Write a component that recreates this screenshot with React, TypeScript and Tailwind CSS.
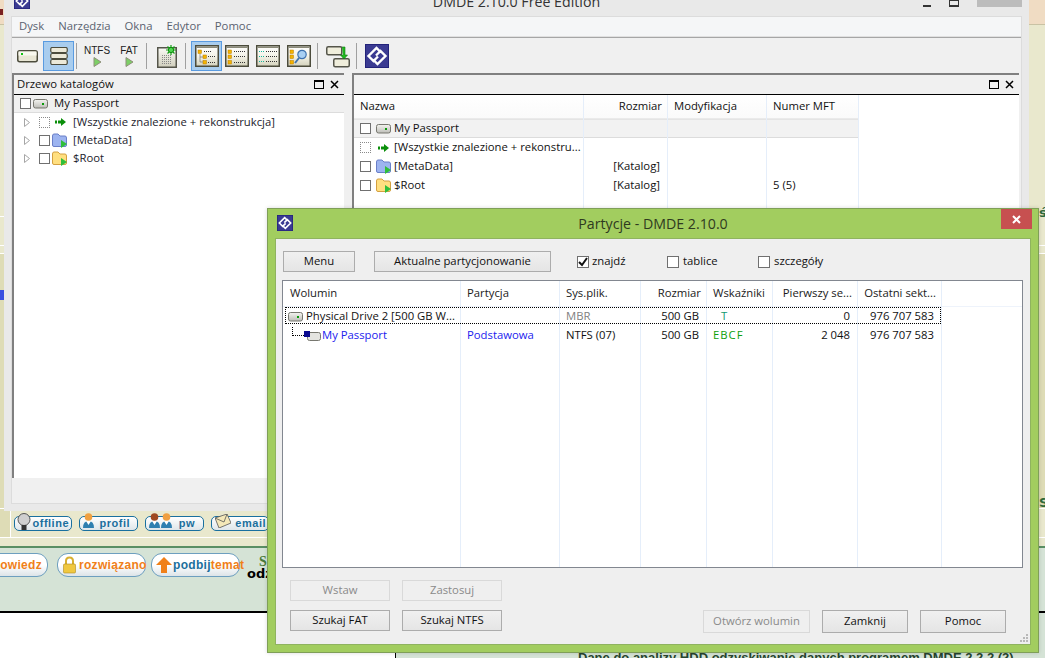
import React from "react";

const Logo = ({ s = 16 }: { s?: number }) => (
  <svg width={s} height={s} viewBox="0 0 24 24" className="block shrink-0">
    <rect width="24" height="24" fill="#23237a" />
    <rect x="1" y="1" width="22" height="22" fill="#3b3b92" />
    <g fill="none" stroke="#fff" strokeWidth="2.4">
      <path d="M16 8.5 L11.5 4 L3.5 12 L8.5 17 L13 12.5" />
      <path d="M8 15.5 L12.5 20 L20.5 12 L15.5 7 L11 11.5" />
    </g>
  </svg>
);

const Drive = () => (
  <svg width="15" height="11" viewBox="0 0 15 11" className="block shrink-0">
    <defs>
      <linearGradient id="dg" x1="0" y1="0" x2="0" y2="1">
        <stop offset="0" stopColor="#f4f4f0" />
        <stop offset="1" stopColor="#bdbdb8" />
      </linearGradient>
    </defs>
    <rect x="0.5" y="1.5" width="14" height="8.5" rx="2" fill="url(#dg)" stroke="#77776f" />
    <rect x="9" y="5" width="2" height="2" fill="#0a9a0a" />
  </svg>
);

const Partition = () => (
  <svg width="17" height="10" viewBox="0 0 17 10" className="block shrink-0">
    <rect x="3.5" y="1.5" width="13" height="8" rx="2" fill="#e4e4e0" stroke="#77776f" />
    <rect x="0" y="0" width="6" height="6" fill="#0a0a90" />
  </svg>
);

const Folder = ({ blue }: { blue?: boolean }) => (
  <svg width="16" height="15" viewBox="0 0 16 15" className="block shrink-0">
    <path
      d="M0.5 3 Q0.5 1 2 1 H6 L8 3 H13 Q14.5 3 14.5 5 V12 Q14.5 13.5 13 13.5 H2 Q0.5 13.5 0.5 12 Z"
      fill={blue ? "#9db4f0" : "#ffdf80"}
      stroke={blue ? "#6a7fc8" : "#d4a040"}
    />
    <path d="M9 7 L15 11 L9 15 Z" fill="#2fbf3a" />
  </svg>
);

const GreenArrow = () => (
  <svg width="11" height="8" viewBox="0 0 11 8" className="block shrink-0">
    <path d="M0 2.5 H2 V5.5 H0 Z M3 2.5 H6 V0 L11 4 L6 8 V5.5 H3 Z" fill="#0a8f0a" />
  </svg>
);

const Check = ({ dotted, size = "w-[11px] h-[11px]", checked }: { dotted?: boolean; size?: string; checked?: boolean }) => (
  <span
    className={`${size} shrink-0 bg-white flex items-center justify-center ${
      dotted ? "border border-dotted border-[#8a8a8a]" : "border border-[#707070]"
    }`}
  >
    {checked && (
      <svg width="10" height="10" viewBox="0 0 10 10">
        <path d="M1 5 L4 8 L9 1" fill="none" stroke="#111" strokeWidth="2" />
      </svg>
    )}
  </span>
);

const Arrowhead = () => (
  <svg width="6" height="9" viewBox="0 0 6 9" className="block shrink-0">
    <path d="M0.5 0.5 L5.5 4.5 L0.5 8.5 Z" fill="#fff" stroke="#a6a6a6" />
  </svg>
);

const PanelControls = () => (
  <div className="flex items-center gap-[6px]">
    <span className="block w-[10px] h-[9px] border border-black border-t-2" />
    <svg width="9" height="9" viewBox="0 0 9 9" className="block">
      <path d="M1 1 L8 8 M8 1 L1 8" stroke="#000" strokeWidth="1.5" />
    </svg>
  </div>
);

const Sep = ({ ml }: { ml: string }) => <span className={`block w-[1px] h-[26px] bg-[#a0a0a0] shrink-0 ${ml}`} />;

const DriveTool = () => (
  <svg width="21" height="13" viewBox="0 0 21 13" className="block ml-[2px] mt-[1px] shrink-0">
    <rect x="0.75" y="0.75" width="19.5" height="11" rx="2" fill="#e8e6d4" stroke="#4c4c3c" strokeWidth="1.5" />
    <rect x="1.5" y="1.5" width="18" height="4" fill="#f8f8ee" />
    <rect x="4" y="3" width="2" height="2" fill="#12c212" />
  </svg>
);

const StackTool = () => (
  <span className="ml-[5px] w-[31px] h-[30px] bg-[#a9cdee] border border-[#5a9be0] flex items-center justify-center shrink-0">
    <svg width="18" height="18" viewBox="0 0 18 18" className="block">
      {[1, 7, 13].map((y) => (
        <rect key={y} x="0.75" y={y - 0.5} width="16.5" height="5" rx="1.5" fill="#ece9d8" stroke="#4c4c3c" strokeWidth="1.2" />
      ))}
    </svg>
  </span>
);

const Play = () => (
  <svg width="9" height="10" viewBox="0 0 9 10" className="block">
    <path d="M1 0.5 L8 5 L1 9.5 Z" fill="#7ccf66" stroke="#8f8f7a" />
  </svg>
);

const LabelTool = ({ t, cls }: { t: string; cls: string }) => (
  <span className={`flex flex-col items-center shrink-0 ${cls}`}>
    <span className="text-[10px] leading-[11px] text-[#222] font-['Liberation_Sans',sans-serif]">{t}</span>
    <span className="mt-[1px]">
      <Play />
    </span>
  </span>
);

const Frame = ({ children }: { children: React.ReactNode }) => (
  <svg width="24" height="22" viewBox="0 0 24 22" className="block shrink-0">
    <defs>
      <linearGradient id="fg" x1="0" y1="0" x2="0" y2="1">
        <stop offset="0" stopColor="#ffffff" />
        <stop offset="0.5" stopColor="#f4f3e8" />
        <stop offset="1" stopColor="#d4d2bc" />
      </linearGradient>
    </defs>
    <rect x="0.75" y="0.75" width="22.5" height="20.5" fill="url(#fg)" stroke="#4c4c3c" strokeWidth="1.5" />
    <rect x="1.5" y="1.5" width="21" height="1.5" fill="#8a8a78" />
    {children}
  </svg>
);

const Dots = ({ x, y, c = "#333", n = 4 }: { x: number; y: number; c?: string; n?: number }) => (
  <g fill={c}>
    {Array.from({ length: n }).map((_, i) => (
      <rect key={i} x={x + i * 2} y={y} width="1" height="1" />
    ))}
  </g>
);
const Y = ({ x, y }: { x: number; y: number }) => <rect x={x} y={y} width="3.5" height="3.5" fill="#f4b400" stroke="#b87a00" strokeWidth="0.5" />;

const DocStar = () => (
  <svg width="21" height="23" viewBox="0 0 21 23" className="block shrink-0">
    <defs>
      <linearGradient id="ds" x1="0" y1="0" x2="0" y2="1">
        <stop offset="0" stopColor="#fafaf6" />
        <stop offset="1" stopColor="#d0cebc" />
      </linearGradient>
    </defs>
    <rect x="0.75" y="2.75" width="18.5" height="19.5" fill="url(#ds)" stroke="#55554a" strokeWidth="1.5" />
    {[10, 12, 14, 16, 18].map((y) => (
      <Dots key={y} x={5} y={y} c="#888" n={5} />
    ))}
    <g stroke="#12a012" strokeWidth="1.2">
      <path d="M14 0 V10 M9 5 H19 M10.5 1.5 L17.5 8.5 M17.5 1.5 L10.5 8.5" />
    </g>
    <circle cx="14" cy="5" r="2.6" fill="#4fd84f" stroke="#0e8a0e" />
  </svg>
);

const SwapTool = () => (
  <svg width="24" height="24" viewBox="0 0 24 24" className="block shrink-0 ml-[8px]">
    <rect x="0.75" y="2.75" width="15" height="8" rx="1.5" fill="#f0eedc" stroke="#55554a" strokeWidth="1.5" />
    <rect x="7.75" y="14.75" width="15.5" height="8" rx="1.5" fill="#f0eedc" stroke="#55554a" strokeWidth="1.5" />
    <path d="M16 3 H19 V11 H21.5 L18 15 L14.5 11 H17" fill="#22b822" stroke="#0e7a0e" strokeWidth="0.6" />
  </svg>
);

const Toolbar = () => (
  <div className="h-[35px] bg-[#f0f0f0] flex items-center pl-[3px] pt-[1px]">
    <DriveTool />
    <StackTool />
    <Sep ml="ml-[2px]" />
    <LabelTool t="NTFS" cls="ml-[8px] w-[24px]" />
    <LabelTool t="FAT" cls="ml-[10px] w-[20px]" />
    <Sep ml="ml-[7px]" />
    <span className="ml-[10px]">
      <DocStar />
    </span>
    <Sep ml="ml-[7px]" />
    <span className="ml-[5px] w-[31px] h-[30px] bg-[#a9cdee] border border-[#5a9be0] flex items-center justify-center shrink-0">
      <Frame>
        <Y x={3} y={5} />
        <Y x={8} y={10} />
        <Y x={8} y={15.5} />
        <path d="M5 9 V17 H8 M5 12 H8" stroke="#777" fill="none" strokeWidth="0.7" />
        <Dots x={9} y={6} />
        <Dots x={13} y={11} n={4} />
        <Dots x={13} y={17} n={4} />
      </Frame>
    </span>
    <span className="ml-[3px]">
      <Frame>
        <Y x={3} y={5} />
        <Y x={3} y={10} />
        <Y x={3} y={15.5} />
        <Dots x={9} y={6} n={6} />
        <Dots x={9} y={11} n={6} />
        <Dots x={9} y={17} n={6} />
      </Frame>
    </span>
    <span className="ml-[7px]">
      <Frame>
        <Dots x={3} y={6} c="#15b8a0" n={3} />
        <Dots x={3} y={11} c="#15b8a0" n={3} />
        <Dots x={3} y={16} c="#15b8a0" n={3} />
        <Dots x={10} y={6} n={6} />
        <Dots x={10} y={11} n={6} />
        <Dots x={10} y={16} n={6} />
      </Frame>
    </span>
    <span className="ml-[7px]">
      <Frame>
        <Y x={3} y={5} />
        <Y x={3} y={10} />
        <Y x={3} y={15.5} />
        <circle cx="15" cy="9.5" r="4.2" fill="#a8d0f4" stroke="#3f73b0" strokeWidth="1.2" />
        <path d="M12 13 L8 18" stroke="#3f73b0" strokeWidth="2" />
      </Frame>
    </span>
    <Sep ml="ml-[6px]" />
    <SwapTool />
    <Sep ml="ml-[6px]" />
    <span className="ml-[8px]">
      <Logo s={24} />
    </span>
  </div>
);

const menu: [string, string][] = [
  ["Dysk", "ml-[7px]"],
  ["Narzędzia", "ml-[14px]"],
  ["Okna", "ml-[14px]"],
  ["Edytor", "ml-[14px]"],
  ["Pomoc", "ml-[14px]"],
];

const TreeRow = ({ icon, text, dotted }: { icon: React.ReactNode; text: string; dotted?: boolean }) => (
  <div className="h-[18px] flex items-center pl-[10px]">
    <Arrowhead />
    <span className="ml-[9px]">
      <Check dotted={dotted} />
    </span>
    <span className={`w-[16px] ml-[2px] flex justify-center`}>{icon}</span>
    <span className="ml-[5px] text-[#1c1c2c] whitespace-nowrap">{text}</span>
  </div>
);

const LeftPanel = () => (
  <div className="w-[332px] border-t-2 border-l-2 border-[#808080] flex flex-col bg-white">
    <div className="h-[20px] bg-[#f0f0f0] border-b border-black flex items-center justify-between pl-[3px] pr-[5px] shrink-0">
      <span>Drzewo katalogów</span>
      <PanelControls />
    </div>
    <div className="h-[18px] bg-[#f0f0f0] border-b border-[#dcdcdc] flex items-center pl-[6px] shrink-0">
      <Check />
      <span className="ml-[2px]">
        <Drive />
      </span>
      <span className="ml-[6px]">My Passport</span>
    </div>
    <div>
      <TreeRow icon={<GreenArrow />} text="[Wszystkie znalezione + rekonstrukcja]" dotted />
      <TreeRow icon={<Folder blue />} text="[MetaData]" />
      <TreeRow icon={<Folder />} text="$Root" />
    </div>
  </div>
);

const fileCols = [
  { w: "w-[230px]", head: "Nazwa", h: "pl-[6px]" },
  { w: "w-[84px]", head: "Rozmiar", h: "justify-end pr-[5px]" },
  { w: "w-[99px]", head: "Modyfikacja", h: "pl-[6px]" },
  { w: "w-[92px]", head: "Numer MFT", h: "pl-[6px]" },
];

const NameCell = ({ icon, text, dotted }: { icon: React.ReactNode; text: string; dotted?: boolean }) => (
  <div className="h-[19px] flex items-center pl-[6px] whitespace-nowrap">
    <Check dotted={dotted} />
    <span className="w-[15px] ml-[5px] flex justify-center">{icon}</span>
    <span className="ml-[3px]">{text}</span>
  </div>
);

const RightPanel = () => (
  <div className="w-[667px] ml-[8px] border-t-2 border-l-2 border-[#808080] flex flex-col bg-white relative">
    <div className="h-[20px] bg-[#f0f0f0] border-b border-black flex items-center justify-end pr-[5px] shrink-0">
      <PanelControls />
    </div>
    <div className="flex flex-1 min-h-0">
      <div className="flex flex-1">
        {fileCols.map((c, i) => (
          <div key={c.head} className={`${c.w} border-r border-[#e5eefa] shrink-0`}>
            <div className={`h-[24px] flex items-center ${c.h} bg-gradient-to-b from-white to-[#fafafa] border-b border-[#eaeaea]`}>{c.head}</div>
            <div className="h-[19px] bg-[#f2f2f2] border-b border-[#dcdcdc] border-t border-t-[#e4e4e4]">
              {i === 0 && (
                <div className="-mt-[1px]">
                  <NameCell icon={<Drive />} text="My Passport" />
                </div>
              )}
            </div>
            {i === 0 && (
              <>
                <NameCell icon={<GreenArrow />} text="[Wszystkie znalezione + rekonstru..." dotted />
                <NameCell icon={<Folder blue />} text="[MetaData]" />
                <NameCell icon={<Folder />} text="$Root" />
              </>
            )}
            {i === 1 && (
              <>
                <div className="h-[19px]" />
                <div className="h-[19px] flex items-center justify-end pr-[7px]">[Katalog]</div>
                <div className="h-[19px] flex items-center justify-end pr-[7px]">[Katalog]</div>
              </>
            )}
            {i === 3 && (
              <>
                <div className="h-[38px]" />
                <div className="h-[19px] flex items-center pl-[6px]">5 (5)</div>
              </>
            )}
          </div>
        ))}
      </div>
    </div>
  </div>
);

const Btn = ({ w, h = "h-[21px]", children, off }: { w: string; h?: string; children: React.ReactNode; off?: boolean }) => (
  <button
    className={`${w} ${h} shrink-0 flex items-center justify-center border ${
      off ? "border-[#d9d9d9] text-[#8a8a8a] bg-[#efefef]" : "border-[#acacac] text-[#111] bg-gradient-to-b from-[#f0f0f0] to-[#e5e5e5]"
    }`}
  >
    {children}
  </button>
);

const volCols = [
  { w: "w-[178px]", head: "Wolumin", h: "pl-[7px]" },
  { w: "w-[99px]", head: "Partycja", h: "pl-[6px]" },
  { w: "w-[81px]", head: "Sys.plik.", h: "pl-[6px]" },
  { w: "w-[66px]", head: "Rozmiar", h: "justify-end pr-[5px]" },
  { w: "w-[66px]", head: "Wskaźniki", h: "pl-[6px]" },
  { w: "w-[85px]", head: "Pierwszy se...", h: "justify-end pr-[5px]" },
  { w: "w-[84px]", head: "Ostatni sekt...", h: "justify-end pr-[5px]" },
];

const Cell = ({ cls = "", children }: { cls?: string; children?: React.ReactNode }) => (
  <div className={`h-[19px] flex items-center whitespace-nowrap ${cls}`}>{children}</div>
);

const volRows: React.ReactNode[][] = [
  [
    <Cell cls="pl-[5px]" key="a">
      <Drive />
      <span className="ml-[3px] text-[#111]">Physical Drive 2 [500 GB W...</span>
    </Cell>,
    <Cell key="b" />,
    <Cell cls="pl-[6px] text-[#7f7f7f]" key="c">MBR</Cell>,
    <Cell cls="justify-end pr-[7px]" key="d">500 GB</Cell>,
    <Cell cls="pl-[14px] text-[#0f9a70]" key="e">T</Cell>,
    <Cell cls="justify-end pr-[7px]" key="f">0</Cell>,
    <Cell cls="justify-end pr-[7px]" key="g">976 707 583</Cell>,
  ],
  [
    <Cell cls="pl-[8px]" key="a">
      <span className="w-[12px] h-[9px] -mt-[8px] border-l border-b border-dotted border-black shrink-0 ml-[1px]" />
      <Partition />
      <span className="ml-[1px] text-[#2222ee]">My Passport</span>
    </Cell>,
    <Cell cls="pl-[6px] text-[#2222ee]" key="b">Podstawowa</Cell>,
    <Cell cls="pl-[6px]" key="c">NTFS (07)</Cell>,
    <Cell cls="justify-end pr-[7px]" key="d">500 GB</Cell>,
    <Cell cls="pl-[6px] text-[#0da00d] tracking-[1px]" key="e">EBCF</Cell>,
    <Cell cls="justify-end pr-[7px]" key="f">2 048</Cell>,
    <Cell cls="justify-end pr-[7px]" key="g">976 707 583</Cell>,
  ],
];

const VolumeList = () => (
  <div className="relative h-[288px] ml-[6px] mr-[7px] mt-[8px] border border-[#828790] bg-white flex">
    {volCols.map((c, i) => (
      <div key={c.head} className={`${c.w} border-r border-[#e5eefa] shrink-0`}>
        <div className={`h-[26px] pb-[1px] pt-[1px] flex items-center whitespace-nowrap ${c.h} border-b border-[#eef3fb] text-[#1a1a1a]`}>{c.head}</div>
        {volRows.map((r, j) => (
          <React.Fragment key={j}>{r[i]}</React.Fragment>
        ))}
      </div>
    ))}
    <div className="flex-1">
      <div className="h-[26px] border-b border-[#eef3fb]" />
    </div>
    <span className="absolute left-[2px] top-[26px] w-[656px] h-[17px] border border-dotted border-black pointer-events-none" />
  </div>
);

const Dialog = () => (
  <div className="absolute left-[267px] top-[208px] w-[772px] h-[445px] bg-[#a2cd5f] border border-[#7f9f58] flex flex-col px-[7px] pb-[7px] shadow-[0_0_4px_rgba(0,0,0,0.15)]">
    <div className="h-[29px] relative flex items-center justify-center shrink-0 text-[14.2px] text-[#2f3a20]">
      <span className="absolute left-[2px] top-[6px]">
        <Logo s={16} />
      </span>
      <span>Partycje - DMDE 2.10.0</span>
      <span className="absolute right-[-1px] top-0 w-[31px] h-[20px] bg-[#c75050] flex items-center justify-center">
        <svg width="9" height="9" viewBox="0 0 9 9">
          <path d="M1 1 L8 8 M8 1 L1 8" stroke="#fff" strokeWidth="2" />
        </svg>
      </span>
    </div>
    <div className="flex-1 bg-[#efefef] border border-[#8fb35f] flex flex-col relative">
      <div className="flex items-center pl-[7px] pt-[12px] h-[33px]">
        <Btn w="w-[72px]">Menu</Btn>
        <span className="ml-[19px]">
          <Btn w="w-[177px]">Aktualne partycjonowanie</Btn>
        </span>
        <span className="ml-[26px]">
          <Check size="w-[12px] h-[12px]" checked />
        </span>
        <span className="ml-[3px] w-[75px]">znajdź</span>
        <Check size="w-[12px] h-[12px]" />
        <span className="ml-[4px] w-[75px]">tablice</span>
        <Check size="w-[12px] h-[12px]" />
        <span className="ml-[4px]">szczegóły</span>
      </div>
      <VolumeList />
      <div className="flex justify-between pl-[14px] pr-[24px] pt-[12px] flex-1">
        <div className="flex flex-col gap-[9px]">
          <div className="flex gap-[12px]">
            <Btn w="w-[100px]" off>Wstaw</Btn>
            <Btn w="w-[100px]" off>Zastosuj</Btn>
          </div>
          <div className="flex gap-[12px]">
            <Btn w="w-[100px]">Szukaj FAT</Btn>
            <Btn w="w-[100px]">Szukaj NTFS</Btn>
          </div>
        </div>
        <div className="flex gap-[12px] items-end pb-[11px]">
          <Btn w="w-[107px]" h="h-[23px]" off>Otwórz wolumin</Btn>
          <Btn w="w-[86px]" h="h-[23px]">Zamknij</Btn>
          <Btn w="w-[86px]" h="h-[23px]">Pomoc</Btn>
        </div>
      </div>
      <svg width="9" height="9" viewBox="0 0 9 9" className="absolute right-[1px] bottom-[1px]">
        <g fill="#b8b8b8">
          <rect x="6" y="0" width="2" height="2" />
          <rect x="3" y="3" width="2" height="2" />
          <rect x="6" y="3" width="2" height="2" />
          <rect x="0" y="6" width="2" height="2" />
          <rect x="3" y="6" width="2" height="2" />
          <rect x="6" y="6" width="2" height="2" />
        </g>
      </svg>
    </div>
  </div>
);

const MainWindow = () => (
  <div className="absolute left-[4px] top-[-12px] w-[1025px] h-[523px] bg-[#e9e9e9] pl-[7px] pr-[7px] flex flex-col">
    <div className="h-[28px] shrink-0 flex items-center justify-center relative text-[14.2px] text-[#333]">
      <span className="absolute left-[3px] top-[5px]">
        <Logo s={16} />
      </span>
      <span>DMDE 2.10.0 Free Edition</span>
      <div className="absolute right-0 top-[12px] flex items-start">
        <span className="block w-[8px] h-[7px] border-b-2 border-[#333] mr-[18px]" />
        <span className="block w-[10px] h-[7px] border border-[#333] border-b-2 mr-[18px]" />
        <span className="block w-[45px] h-[7px] bg-[#bcbcbc]" />
      </div>
    </div>
    <div className="border border-[#dcdcdc] flex flex-col h-[488px] bg-[#f0f0f0]">
      <div className="h-[19px] bg-[#f5f6f7] flex items-center text-[#5a6270] shrink-0">
        {menu.map(([m, c]) => (
          <span key={m} className={c}>
            {m}
          </span>
        ))}
      </div>
      <div className="h-[1px] bg-[#e0e0e0]" />
      <div className="h-[1px] bg-[#a6a6a6]" />
      <Toolbar />
      <div className="flex h-[405px] shrink-0">
        <LeftPanel />
        <RightPanel />
      </div>
    </div>
  </div>
);

const Pill = ({ w, children, cls = "" }: { w: string; children: React.ReactNode; cls?: string }) => (
  <span className={`${w} h-[15px] shrink-0 rounded-[5px] border border-[#19709f] bg-gradient-to-b from-white to-[#dfe6ea] flex items-center justify-end pr-[2px] text-[11px] font-bold text-[#1b6f9d] font-['Liberation_Sans',sans-serif] tracking-[0.5px] relative ${cls}`}>
    {children}
  </span>
);

const Person = ({ c }: { c: string }) => (
  <svg width="11" height="15" viewBox="0 0 11 15" className="block shrink-0">
    <circle cx="5.5" cy="4" r="3.8" fill={c} />
    <path d="M0 15 Q0 8 5.5 8 Q11 8 11 15 Z" fill="#2f7fb0" />
    <path d="M3 8 L5.5 12 L8 8 Z" fill="#fff" />
  </svg>
);

const Bulb = () => (
  <svg width="14" height="18" viewBox="0 0 14 18" className="block shrink-0">
    <circle cx="7" cy="6.5" r="6" fill="#cfcfcf" stroke="#555" />
    <rect x="4.5" y="12" width="5" height="5" fill="#333" />
  </svg>
);

const Mail = () => (
  <svg width="16" height="14" viewBox="0 0 16 14" className="block shrink-0">
    <path d="M0 4 L12 0 L16 9 L4 14 Z" fill="#f4e8b8" stroke="#555" strokeWidth="0.8" />
    <path d="M0 4 L9 8 L12 0" fill="none" stroke="#555" strokeWidth="0.8" />
  </svg>
);

const Big = ({ w, cls = "", children }: { w: string; cls?: string; children: React.ReactNode }) => (
  <span className={`${w} h-[24px] shrink-0 rounded-[11px] border border-[#6d9fbf] bg-gradient-to-b from-white via-white to-[#dde4e8] flex items-center justify-center text-[12px] font-bold tracking-[0.3px] font-['Liberation_Sans',sans-serif] ${cls}`}>
    {children}
  </span>
);

const Background = () => (
  <div className="w-full h-full flex flex-col bg-white font-['Liberation_Sans',sans-serif]">
    <div className="h-[25px] bg-[#f0dcc3] border-b border-[#c9c2a4] shrink-0 relative overflow-hidden">
      <span className="absolute left-0 top-[9px] w-[3px] h-[6px] bg-[#7a2020]" />
    </div>
    <div className="h-[192px] bg-[#e9e8cd] shrink-0 border-b border-white" />
    <div className="h-[29px] bg-[#e9e8cd] shrink-0 border-b border-white" />
    <div className="h-[8px] bg-[#e9e8cd] shrink-0 border-b border-white" />
    <div className="h-[254px] bg-[#dedcb6] shrink-0 flex items-start">
      <span className="w-[4px] h-[10px] bg-[#3a50e0] mt-[36px]" />
    </div>
    <div className="h-[29px] bg-[#e9e8cd] shrink-0 border-t border-white flex">
      <span className="w-[11px] h-full shrink-0 bg-[#dedcb6] border-r border-white" />
    </div>
    <div className="h-[1px] bg-white shrink-0" />
    <div className="h-[8px] bg-[#e9e8cd] shrink-0" />
    <div className="h-[2px] bg-[#5a8f64] shrink-0" />
    <div className="h-[65px] bg-[#d5e3d6] shrink-0 border-b-2 border-black" />
    <div className="flex-1 flex min-h-0">
      <span className="w-[396px] shrink-0 bg-white border-r border-black" />
      <span className="flex-1 bg-[#d5e3d6] pl-[182px] pt-[37px] overflow-hidden text-[13px] font-bold text-[#27452f] whitespace-nowrap leading-[16px]">
        Dane do analizy HDD odzyskiwanie danych programem DMDE 2.2.2 (2)
      </span>
    </div>
  </div>
);

export default function App() {
  return (
    <div className="relative w-[1045px] h-[658px] overflow-hidden text-[11.3px] text-[#111] font-['Open_Sans',sans-serif]">
      <Background />
      <div className="absolute left-[14px] top-[516px] flex gap-[7px]">
        <Pill w="w-[58px]">
          <span className="absolute left-[2px] top-[-4px]"><Bulb /></span>offline
        </Pill>
        <Pill w="w-[59px]" cls="pr-[7px]">
          <span className="absolute left-[3px] top-[-4px]"><Person c="#f0a040" /></span>profil
        </Pill>
        <Pill w="w-[59px]" cls="pr-[8px]">
          <span className="absolute left-[3px] top-[-4px] flex gap-[1px]"><Person c="#a04a20" /><Person c="#f0a040" /></span>pw
        </Pill>
        <Pill w="w-[58px]">
          <span className="absolute left-[3px] top-[-3px]"><Mail /></span>email
        </Pill>
      </div>
      <div className="absolute left-[-40px] top-[553px] flex">
        <Big w="w-[88px]" cls="text-[#f08018] !justify-end pr-[5px]">powiedz</Big>
        <Big w="w-[89px]" cls="ml-[9px] text-[#f08018] !justify-start pl-[4px]">
          <svg width="15" height="18" viewBox="0 0 14 18" className="block shrink-0 mr-[2px]">
            <path d="M3.5 8 V5 Q3.5 1.5 7 1.5 Q10.5 1.5 10.5 5 V8" fill="none" stroke="#d8b030" strokeWidth="2" />
            <rect x="1" y="8" width="12" height="9" rx="1" fill="#f0c840" stroke="#b08a20" strokeWidth="0.6" />
          </svg>
          rozwiązano
        </Big>
        <Big w="w-[89px]" cls="ml-[5px] text-[#1b6f9d] !justify-start pl-[4px]">
          <svg width="16" height="16" viewBox="0 0 16 16" className="block shrink-0 mr-[1px]">
            <path d="M8 0 L16 8 H11 V16 H5 V8 H0 Z" fill="#f08018" />
          </svg>
          podbij<span className="text-[#f08018]">temat</span>
        </Big>
      </div>
      <span className="absolute left-[259px] top-[551px] text-[14px] font-bold text-[#4a7a3a] font-['Liberation_Serif',serif]">S</span>
      <span className="absolute left-[247px] top-[564px] text-[13px] font-bold text-black font-['DejaVu_Sans',sans-serif]">odz</span>
      <span className="absolute left-[1039px] top-[203px] text-[13px] font-bold text-[#2f6a3a] font-['DejaVu_Sans',sans-serif]">ś</span>
      <span className="absolute left-[1039px] top-[493px] text-[13px] font-bold text-[#2f6a3a] font-['DejaVu_Sans',sans-serif]">S</span>
      <MainWindow />
      <Dialog />
    </div>
  );
}
